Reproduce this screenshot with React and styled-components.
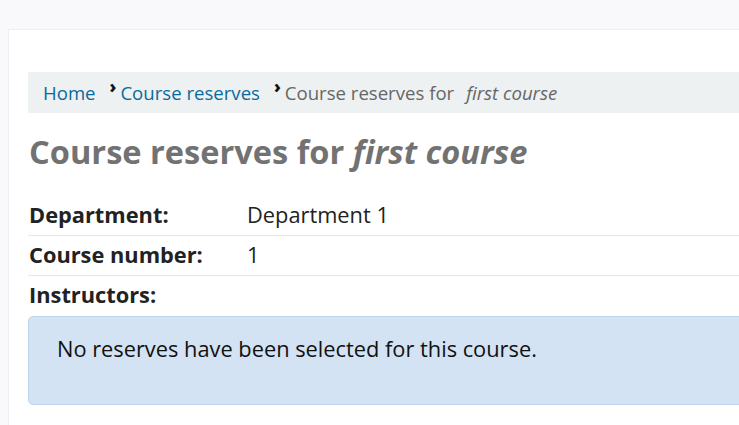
import styled, { createGlobalStyle } from "styled-components"

const Global = createGlobalStyle`
  html, body {
    margin: 0;
    padding: 0;
    background: #f9f8fb;
    font-family: "Open Sans", "Liberation Sans", sans-serif;
    overflow: hidden;
  }
`

const Page = styled.div`
  width: 739px;
  height: 425px;
  padding: 29px 0 0 8px;
  box-sizing: border-box;
  overflow: hidden;
`

const Panel = styled.main`
  width: 760px;
  min-height: 420px;
  background: #fff;
  border: 1px solid #eceef1;
  box-sizing: border-box;
  padding: 42px 0 0 19px;
`

const Crumbs = styled.nav`
  display: flex;
  align-items: center;
  height: 41px;
  background: #eef1f2;
  padding-left: 15px;
  font-size: 18.6px;
`

const Crumb = styled.a`
  color: ${p => (p.$current ? "#666" : "#0a6a9b")};
  text-decoration: none;
  em { margin-left: 12px; }
`

const Sep = styled.span`
  font-weight: 800;
  color: #111;
  font-size: 17px;
  margin: 0 4px 0 14px;
  position: relative;
  top: -6px;
`

const Title = styled.h1`
  margin: 18px 0 23px 1px;
  font-size: 32.6px;
  font-weight: 700;
  color: #727272;
  line-height: 42px;
`

const Row = styled.div`
  display: grid;
  grid-template-columns: 218px 1fr;
  align-items: center;
  height: 40px;
  box-sizing: border-box;
  padding: 0 0 3px 1px;
  border-bottom: ${p => (p.$last ? "none" : "1px solid #e6e6e6")};
  font-size: 21.8px;
  color: #222;
`

const Label = styled.span`
  font-weight: 700;
`

const Alert = styled.div`
  height: 89px;
  box-sizing: border-box;
  background: #d3e3f3;
  border: 1px solid #bdd4ec;
  border-radius: 5px;
  padding: 17px 28px;
  font-size: 21.8px;
  color: #111;
`

export default function App() {
  return (
    <Page>
      <Global />
      <Panel>
        <Crumbs>
          <Crumb href="#">Home</Crumb>
          <Sep>›</Sep>
          <Crumb href="#">Course reserves</Crumb>
          <Sep>›</Sep>
          <Crumb $current>
            Course reserves for<em>first course</em>
          </Crumb>
        </Crumbs>
        <Title>
          Course reserves for <em>first course</em>
        </Title>
        <Row>
          <Label>Department:</Label>
          <span>Department 1</span>
        </Row>
        <Row>
          <Label>Course number:</Label>
          <span>1</span>
        </Row>
        <Row $last>
          <Label>Instructors:</Label>
          <span></span>
        </Row>
        <Alert>No reserves have been selected for this course.</Alert>
      </Panel>
    </Page>
  )
}
